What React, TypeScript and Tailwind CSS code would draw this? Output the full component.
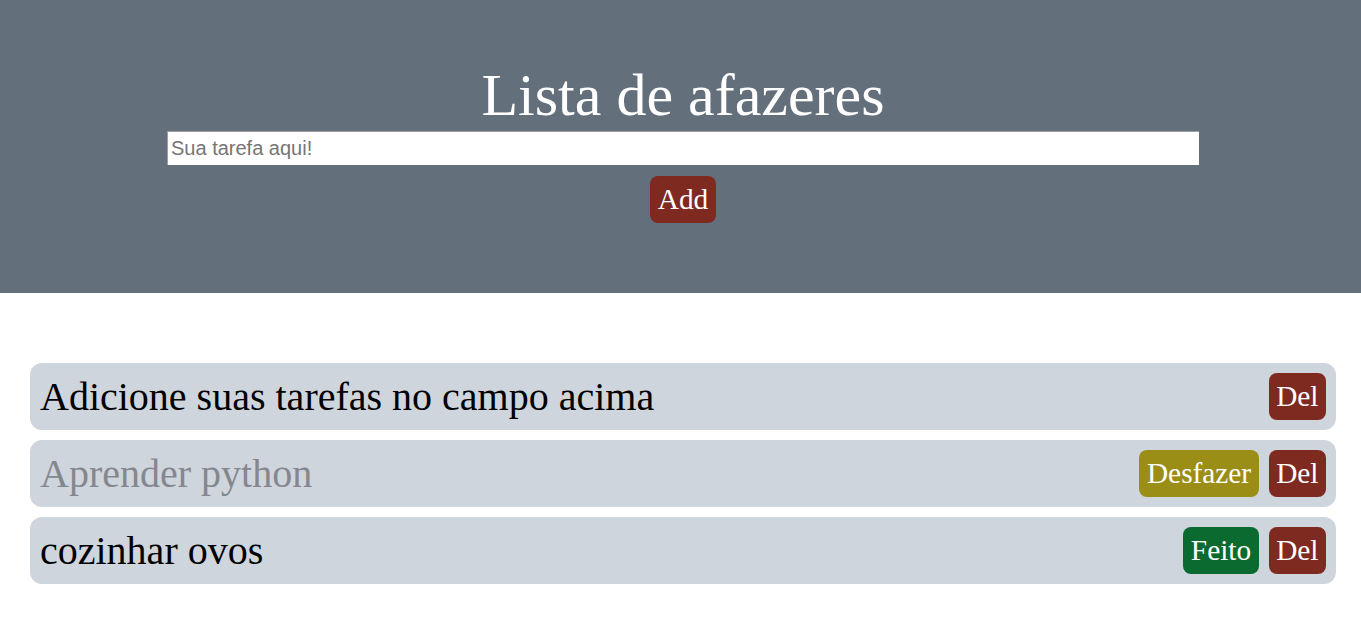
import React from "react";

const serif = { fontFamily: '"Liberation Serif", "Times New Roman", serif' };

type Task = { text: string; done: boolean; showToggle: boolean };

const tasks: Task[] = [
  { text: "Adicione suas tarefas no campo acima", done: false, showToggle: false },
  { text: "Aprender python", done: true, showToggle: true },
  { text: "cozinhar ovos", done: false, showToggle: true },
];

export default function App() {
  return (
    <div className="min-h-[634px] bg-white" style={serif}>
      <header className="bg-[#646f7c] pl-[5px] pt-[65px] pb-[70px] flex flex-col items-center">
        <h1 className="text-[60px] leading-[60px] text-white font-normal">Lista de afazeres</h1>
        <input
          type="text"
          placeholder="Sua tarefa aqui!"
          className="mt-[6px] w-[1032px] h-[34px] bg-white px-[3px] text-[20px] text-black placeholder:text-[#757575] outline-none border-l border-t border-[#9aa0a6]"
          style={{ fontFamily: '"Liberation Sans", Arial, sans-serif' }}
        />
        <button className="mt-[11px] h-[47px] px-[8px] rounded-[8px] bg-[#7f2a20] text-white text-[29.33px] leading-none" style={serif}>
          Add
        </button>
      </header>
      <ul className="mt-[70px] ml-[30px] w-[1306px] flex flex-col gap-[10px]">
        {tasks.map((t, i) => (
          <li
            key={i}
            className="h-[67px] rounded-[12px] bg-[#cfd5dd] flex items-center justify-between px-[10px]"
          >
            <span className={`text-[40px] leading-[46px] ${t.done ? "text-[#85878f]" : "text-black"}`}>{t.text}</span>
            <div className="flex gap-[10px]">
              {t.showToggle && (
                <button
                  className={`h-[47px] px-[7.5px] rounded-[8px] text-white text-[29.33px] leading-none ${
                    t.done ? "bg-[#9b8e17]" : "bg-[#0b6a2f]"
                  }`}
                  style={serif}
                >
                  {t.done ? "Desfazer" : "Feito"}
                </button>
              )}
              <button className="h-[47px] px-[7.5px] rounded-[8px] bg-[#7f2a20] text-white text-[29.33px] leading-none" style={serif}>
                Del
              </button>
            </div>
          </li>
        ))}
      </ul>
    </div>
  );
}
